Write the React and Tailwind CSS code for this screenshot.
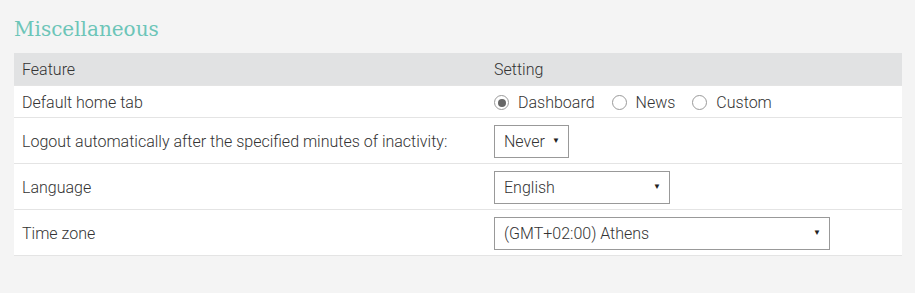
const Radio = ({ label, checked }) => (
  <label className="flex items-center gap-[9px] mr-[17px]">
    <span className="w-[15px] h-[15px] rounded-full border border-[#9a9a9a] bg-white flex items-center justify-center">
      {checked && <span className="w-[8px] h-[8px] rounded-full bg-[#666]" />}
    </span>
    <span>{label}</span>
  </label>
);

const Select = ({ value, width }) => (
  <div className={`${width} h-[33px] border border-[#999] bg-white flex items-center justify-between pl-[9px] pr-[8px] pt-[1px]`}>
    <span>{value}</span>
    <span className="text-[8px] text-[#222] pb-[3px]">▼</span>
  </div>
);

const Row = ({ feature, children, tall }) => (
  <div className={`grid grid-cols-[472px_1fr] border-t border-[#e4e4e4] ${tall ? "h-[46px]" : "h-[32px]"}`}>
    <div className="flex items-center px-[8px] pt-[2px]">{feature}</div>
    <div className="flex items-center px-[8px] pt-[2px]">{children}</div>
  </div>
);

export default function App() {
  return (
    <div className="min-h-[293px] bg-[#f4f4f4] pt-[16px] px-[14px] pr-[13px]" style={{ fontFamily: "Roboto, 'Liberation Sans', sans-serif" }}>
      <h2 className="text-[20px] leading-[26px] text-[#6cc5b8] mb-[11px]" style={{ fontFamily: "'DejaVu Serif', 'Liberation Serif', serif" }}>
        Miscellaneous
      </h2>
      <div className="bg-white text-[16px] font-light text-[#333] border-b border-[#e4e4e4]">
        <div className="grid grid-cols-[472px_1fr] h-[32px] bg-[#e1e2e3]">
          <div className="flex items-center px-[8px] pt-[1px]">Feature</div>
          <div className="flex items-center px-[8px] pt-[1px]">Setting</div>
        </div>
        <Row feature="Default home tab">
          <div className="flex items-center">
            <Radio label="Dashboard" checked />
            <Radio label="News" />
            <Radio label="Custom" />
          </div>
        </Row>
        <Row feature="Logout automatically after the specified minutes of inactivity:" tall>
          <Select value="Never" width="w-[75px]" />
        </Row>
        <Row feature="Language" tall>
          <Select value="English" width="w-[176px]" />
        </Row>
        <Row feature="Time zone" tall>
          <Select value="(GMT+02:00) Athens" width="w-[336px]" />
        </Row>
      </div>
    </div>
  );
}
